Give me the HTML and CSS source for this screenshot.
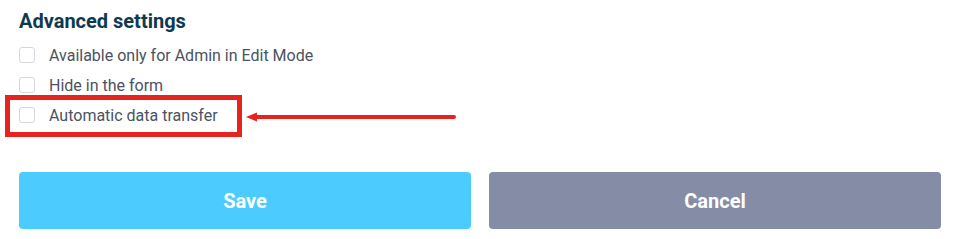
FILE: index.html
```html
<!DOCTYPE html>
<html lang="en">
<head>
    <meta charset="UTF-8">
    <meta name="viewport" content="width=device-width, initial-scale=1.0">
    <title>Advanced settings</title>
    <link rel="stylesheet" href="styles.css">
</head>
<body>
    <div class="panel">
        <h2 class="title">Advanced settings</h2>
        <div class="options">
            <label class="option">
                <span class="box"></span>
                <span>Available only for Admin in Edit Mode</span>
            </label>
            <label class="option">
                <span class="box"></span>
                <span>Hide in the form</span>
            </label>
            <label class="option marked">
                <span class="box"></span>
                <span>Automatic data transfer</span>
                <span class="highlight"></span>
                <span class="arrow">
                    <svg width="212" height="10" viewBox="0 0 212 10">
                        <path d="M9 5 H208" stroke="#e8231e" stroke-width="4" stroke-linecap="round"/>
                        <path d="M0 5 L11 0.5 L11 9.5 Z" fill="#e8231e"/>
                    </svg>
                </span>
            </label>
        </div>
        <div class="actions">
            <button class="btn save">Save</button>
            <button class="btn cancel">Cancel</button>
        </div>
    </div>
</body>
</html>
```

FILE: styles.css
```css
body {
    margin: 0;
    background: #fff;
    font-family: Roboto, "Liberation Sans", Arial, sans-serif;
}
.panel {
    padding: 8px 17px 0 19px;
}
.title {
    margin: 0;
    font-size: 20px;
    line-height: 26px;
    font-weight: 700;
    color: #0e3a4f;
}
.options {
    margin-top: 6px;
    display: flex;
    flex-direction: column;
}
.option {
    position: relative;
    display: flex;
    align-items: center;
    gap: 14px;
    height: 30px;
    font-size: 16px;
    color: #4b5263;
}
.box {
    width: 14px;
    height: 14px;
    border: 1px solid #d3d8de;
    border-radius: 3px;
    background: #fff;
}
.highlight {
    position: absolute;
    left: -14px;
    top: -5px;
    width: 227px;
    height: 32px;
    border: 5px solid #e8231e;
}
.arrow {
    position: absolute;
    left: 227px;
    top: 12px;
    height: 10px;
    line-height: 0;
}
.actions {
    margin-top: 42px;
    display: flex;
    gap: 18px;
}
.btn {
    flex: 1;
    height: 57px;
    border: 0;
    border-radius: 4px;
    font-family: inherit;
    font-size: 20px;
    font-weight: 700;
    color: #fff;
    cursor: pointer;
}
.save {
    background: #4bcbfe;
}
.cancel {
    background: #848da5;
}
```
